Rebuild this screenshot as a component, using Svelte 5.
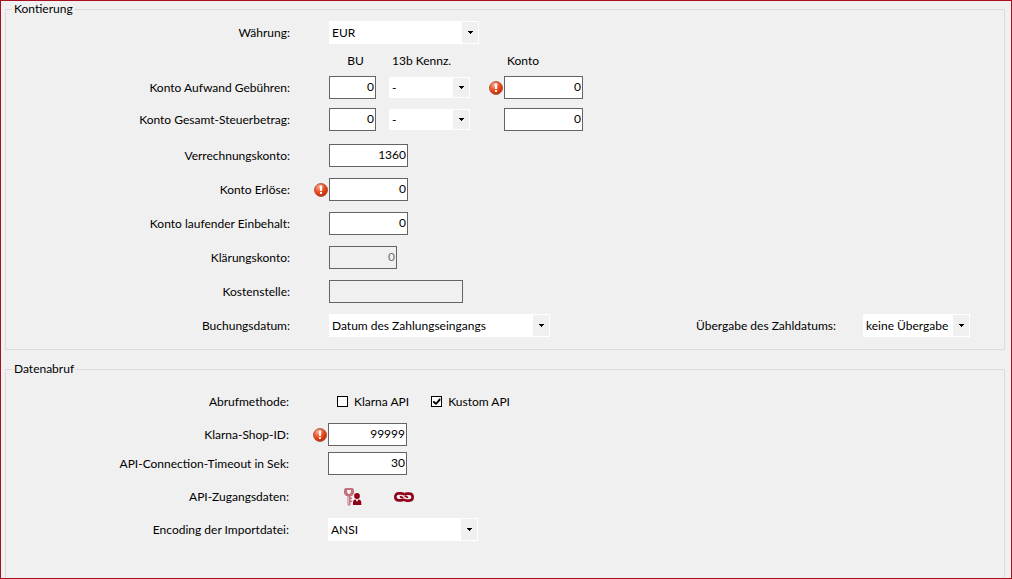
<script>
  let currency = $state('EUR');
  let bookingDate = $state('Datum des Zahlungseingangs');
  let paymentDate = $state('keine Übergabe');
  let encoding = $state('ANSI');
  let klarnaApi = $state(false);
  let kustomApi = $state(true);
  let shopId = $state('99999');
  let timeout = $state('30');

  let feeRows = $state([
    { id: 'gebuehren', label: 'Konto Aufwand Gebühren:', bu: '0', kennz: '-', konto: '0', invalid: true },
    { id: 'steuer', label: 'Konto Gesamt-Steuerbetrag:', bu: '0', kennz: '-', konto: '0', invalid: false }
  ]);

  let accounts = $state([
    { id: 'verrechnung', label: 'Verrechnungskonto:', value: '1360', size: 'medium' },
    { id: 'erloese', label: 'Konto Erlöse:', value: '0', size: 'medium', invalid: true },
    { id: 'einbehalt', label: 'Konto laufender Einbehalt:', value: '0', size: 'medium' },
    { id: 'klaerung', label: 'Klärungskonto:', value: '0', size: 'small', disabled: true },
    { id: 'kostenstelle', label: 'Kostenstelle:', value: '', size: 'large', disabled: true }
  ]);
</script>

{#snippet status(invalid)}
  <span class="status">
    {#if invalid}
      <svg width="14" height="14" viewBox="0 0 14 14" role="img" aria-label="Pflichtfeld">
        <defs>
          <radialGradient id="ball" cx="0.35" cy="0.25" r="0.8">
            <stop offset="0" stop-color="#f9a68c" />
            <stop offset="0.45" stop-color="#ee5a30" />
            <stop offset="0.8" stop-color="#d93206" />
            <stop offset="1" stop-color="#a83a20" />
          </radialGradient>
        </defs>
        <circle cx="7" cy="7" r="6.5" fill="url(#ball)" stroke="#a8482f" stroke-width="0.8" />
        <path d="M5.600 2.600h2.800l-.4 5.400H6z" fill="#fff" />
        <rect x="6" y="9" width="2" height="2" fill="#fff" />
      </svg>
    {/if}
  </span>
{/snippet}

{#snippet arrow()}
  <span class="arrow">
    <svg width="5" height="3" viewBox="0 0 5 3" aria-hidden="true" shape-rendering="crispEdges">
      <path d="M0 0h5v1H4v1H3v1H2V2H1V1H0z" fill="#000" />
    </svg>
  </span>
{/snippet}

<main>
  <fieldset class="kontierung">
    <legend>Kontierung</legend>

    <div class="row">
      <label class="name" for="waehrung">Währung:</label>
      {@render status(false)}
      <span class="select w-currency">
        <select id="waehrung" bind:value={currency}>
          <option>EUR</option>
        </select>
        {@render arrow()}
      </span>
    </div>

    <div class="fees">
      <div class="heads">
        <span class="bu">BU</span>
        <span class="kennz">13b Kennz.</span>
        <span class="konto">Konto</span>
      </div>
      {#each feeRows as row (row.id)}
        <div class="row">
          <label class="name" for={row.id}>{row.label}</label>
          {@render status(false)}
          <input class="bu" id={row.id} type="text" bind:value={row.bu} />
          <span class="select kennz">
            <select aria-label="13b Kennz." bind:value={row.kennz}>
              <option>-</option>
            </select>
            {@render arrow()}
          </span>
          {@render status(row.invalid)}
          <input class="medium" type="text" aria-label="Konto" bind:value={row.konto} />
        </div>
      {/each}
    </div>

    {#each accounts as account (account.id)}
      <div class="row">
        <label class="name" for={account.id}>{account.label}</label>
        {@render status(account.invalid)}
        <input class={account.size} id={account.id} type="text" disabled={account.disabled} bind:value={account.value} />
      </div>
    {/each}

    <div class="row">
      <label class="name" for="buchungsdatum">Buchungsdatum:</label>
      {@render status(false)}
      <span class="select w-date">
        <select id="buchungsdatum" bind:value={bookingDate}>
          <option>Datum des Zahlungseingangs</option>
        </select>
        {@render arrow()}
      </span>
      <div class="payment">
        <label for="zahldatum">Übergabe des Zahldatums:</label>
        <span class="select w-payment">
          <select id="zahldatum" bind:value={paymentDate}>
            <option>keine Übergabe</option>
          </select>
          {@render arrow()}
        </span>
      </div>
    </div>
  </fieldset>

  <fieldset class="datenabruf">
    <legend>Datenabruf</legend>

    <div class="row" role="group" aria-labelledby="abrufmethode">
      <span class="name" id="abrufmethode">Abrufmethode:</span>
      {@render status(false)}
      <div class="checks">
        <label><input type="checkbox" bind:checked={klarnaApi} />Klarna API</label>
        <label><input type="checkbox" bind:checked={kustomApi} />Kustom API</label>
      </div>
    </div>

    <div class="shop">
      <div class="row">
        <label class="name" for="shopid">Klarna-Shop-ID:</label>
        {@render status(true)}
        <input class="medium" id="shopid" type="text" bind:value={shopId} />
      </div>
      <div class="row">
        <label class="name" for="timeout">API-Connection-Timeout in Sek:</label>
        {@render status(false)}
        <input class="medium" id="timeout" type="text" bind:value={timeout} />
      </div>
    </div>

    <div class="row">
      <span class="name">API-Zugangsdaten:</span>
      {@render status(false)}
      <div class="actions">
        <button type="button" aria-label="Zugangsdaten bearbeiten">
          <svg width="18" height="18" viewBox="0 0 18 18">
            <path fill="#c4717c" fill-rule="evenodd" d="M1.500 0h7L10 1.500v4L8 8H6.500v1.500H8V11H6.500v1.500H8V14H6.500v2.500L5 18l-1.500-1.500V8H2L0 5.500v-4zM3 2v2.200L4.500 6h1L7 4.200V2z" />
            <path d="M4.500 8.500v8" stroke="#e8c8cc" stroke-width="0.8" />
            <circle cx="13" cy="8" r="2.900" fill="#900018" />
            <path fill="#900018" d="M9 17v-2.500c0-2 1-3 2.500-3l1.500 2 1.500-2c1.500 0 2.800 1 2.800 3V17z" />
            <path fill="#f0c8cc" d="M11.700 11.500h2.600L13 14z" />
          </svg>
        </button>
        <button type="button" aria-label="Verbindung testen">
          <svg width="20" height="10" viewBox="0 0 20 10">
            <g fill="none" stroke="#900018" stroke-width="2.600">
              <path d="M10.500 3C9.800 1.700 8.500 1.400 7 1.400H5C2.500 1.400 1.300 3 1.300 5S2.500 8.400 5 8.400h1.500c1.200 0 2.200-.3 3-1" />
              <path d="M9.500 7c.7 1.300 2 1.600 3.500 1.600h2c2.500 0 3.700-1.600 3.700-3.600S17.500 1.600 15 1.600h-1.500c-1.200 0-2.200.3-3 1" />
              <path d="M6.500 4c.3 1.300 1.500 1.800 3 1.800M13.500 6c-.3-1.300-1.500-1.800-3-1.800" stroke-width="1.800" />
            </g>
          </svg>
        </button>
      </div>
    </div>

    <div class="row">
      <label class="name" for="encoding">Encoding der Importdatei:</label>
      {@render status(false)}
      <span class="select w-currency">
        <select id="encoding" bind:value={encoding}>
          <option>ANSI</option>
        </select>
        {@render arrow()}
      </span>
    </div>
  </fieldset>
</main>

<style>
  :global(body) {
    background: #f0f0f0;
  }

  main {
    --label: 278px;
    box-sizing: border-box;
    min-height: 100vh;
    display: flex;
    flex-direction: column;
    gap: 11px;
    padding: 0 6px 0 4px;
    border: 1px solid #a81020;
    background: #f0f0f0;
    color: #000;
    font: 12px/16px Lato, "Open Sans", sans-serif;
  }

  fieldset {
    display: flex;
    flex-direction: column;
    min-width: 0;
    margin: 0;
    border: 1px solid #dcdcdc;
  }

  .kontierung {
    gap: 11px;
    padding: 4px 6px 12px;
  }

  .datenabruf {
    --label: 277px;
    flex: 1;
    gap: 10px;
    padding: 13px 6px 0;
    border-bottom: none;
  }

  legend {
    padding: 0 2px;
  }

  .row {
    display: flex;
    align-items: center;
    height: 23px;
  }

  .name {
    width: var(--label);
    margin-right: 24px;
    text-align: right;
    white-space: nowrap;
  }

  .status {
    display: flex;
    flex: none;
    width: 15px;
  }

  input,
  select,
  button {
    box-sizing: border-box;
    margin: 0;
    border-radius: 0;
    color: inherit;
    font: inherit;
  }

  input[type="text"] {
    height: 23px;
    padding: 0 1px 2px;
    border: 1px solid #646464;
    background: #fff;
    text-align: right;
  }

  input[type="text"]:disabled {
    background: #f0f0f0;
    color: #6d6d6d;
  }

  input.bu {
    width: 47px;
  }

  .small {
    width: 68px;
  }

  .medium {
    width: 79px;
  }

  .large {
    width: 134px;
  }

  .select {
    position: relative;
    display: flex;
    height: 23px;
  }

  select {
    width: 100%;
    padding: 0 18px 0 3px;
    border: none;
    background: #fff;
    appearance: none;
  }

  .arrow {
    position: absolute;
    top: 1px;
    right: 1px;
    bottom: 1px;
    display: flex;
    align-items: center;
    justify-content: center;
    width: 16px;
    background: #f0f0f0;
    pointer-events: none;
  }

  .w-currency {
    width: 150px;
  }

  .w-date {
    width: 221px;
  }

  .w-payment {
    width: 107px;
  }

  .fees {
    display: flex;
    flex-direction: column;
    gap: 9px;
    padding-bottom: 2px;
  }

  .heads {
    display: flex;
    padding-left: calc(var(--label) + 39px);
    line-height: 12px;
  }

  .heads .bu {
    width: 47px;
    text-align: center;
    text-indent: 6px;
  }

  .kennz {
    width: 81px;
    margin: 0 19px 0 13px;
  }

  .select.kennz {
    height: 21px;
  }

  .heads .kennz {
    text-indent: 3px;
  }

  .konto {
    padding-left: 18px;
  }

  .payment {
    display: flex;
    align-items: center;
    gap: 27px;
    margin: 0 28px 0 auto;
  }

  .shop {
    display: flex;
    flex-direction: column;
    gap: 6px;
  }

  .checks {
    display: flex;
    gap: 22px;
    padding-left: 9px;
  }

  .checks label {
    display: flex;
    align-items: center;
    gap: 6px;
  }

  input[type="checkbox"] {
    width: 11px;
    height: 11px;
    border: 1px solid #000;
    background: #fff;
    appearance: none;
  }

  input[type="checkbox"]:checked::before {
    content: "";
    display: block;
    height: 9px;
    background: #000;
    clip-path: polygon(11% 45%, 22% 45%, 44% 62%, 80% 16%, 92% 16%, 92% 40%, 44% 90%, 11% 64%);
  }

  .actions {
    display: flex;
    align-items: center;
    gap: 32px;
    padding-left: 16px;
  }

  button {
    display: flex;
    padding: 0;
    border: none;
    background: none;
  }
</style>
